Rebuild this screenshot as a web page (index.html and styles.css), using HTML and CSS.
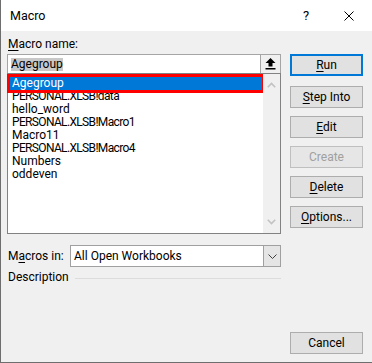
FILE: index.html
```html
<!DOCTYPE html>
<html>
<head>
<meta charset="utf-8">
<link rel="stylesheet" href="styles.css">
</head>
<body>
<div class="window">
  <div class="titlebar">
    <span class="title">Macro</span>
    <span class="help">?</span>
    <span class="close">
      <svg width="10" height="10" viewBox="0 0 10 10"><path d="M0.5 0.5 L9.5 9.5 M9.5 0.5 L0.5 9.5" stroke="#000" stroke-width="1" fill="none"/></svg>
    </span>
  </div>
  <div class="body">
    <div class="left">
      <div class="label"><u>M</u>acro name:</div>
      <div class="namebox">
        <div class="nameinput"><span class="sel">Agegroup</span></div>
        <div class="upbtn">
          <svg width="11" height="12" viewBox="0 0 11 12"><polygon points="5.5,0 10.5,5 7.5,5 7.5,8.5 3.5,8.5 3.5,5 0.5,5" fill="#000"/><rect x="0.5" y="10" width="10" height="1.5" fill="#000"/></svg>
        </div>
      </div>
      <div class="listbox">
        <ul class="items">
          <li class="item selected">Agegroup</li>
          <li class="item caps">PERSONAL.XLSB!data</li>
          <li class="item">hello_word</li>
          <li class="item caps">PERSONAL.XLSB!Macro1</li>
          <li class="item">Macro11</li>
          <li class="item caps">PERSONAL.XLSB!Macro4</li>
          <li class="item">Numbers</li>
          <li class="item">oddeven</li>
        </ul>
        <div class="scrollbar">
          <svg width="9" height="6" viewBox="0 0 9 6"><polyline points="0.8,5.2 4.5,1.5 8.2,5.2" stroke="#c2c2c2" stroke-width="1.6" fill="none"/></svg>
          <svg width="9" height="6" viewBox="0 0 9 6"><polyline points="0.8,0.8 4.5,4.5 8.2,0.8" stroke="#c2c2c2" stroke-width="1.6" fill="none"/></svg>
        </div>
      </div>
      <div class="macrosin">
        <span class="label2">M<u>a</u>cros in:</span>
        <div class="combo">
          <span class="combotext">All Open Workbooks</span>
          <div class="dropbtn">
            <svg width="9" height="5" viewBox="0 0 9 5"><polyline points="0.5,0.5 4.5,4.5 8.5,0.5" stroke="#404040" stroke-width="1" fill="none"/></svg>
          </div>
        </div>
      </div>
      <div class="desc"><span>Description</span><div class="rule"></div></div>
    </div>
    <div class="right">
      <div class="btn default"><u>R</u>un</div>
      <div class="btn"><u>S</u>tep Into</div>
      <div class="btn"><u>E</u>dit</div>
      <div class="btn disabled">Create</div>
      <div class="btn"><u>D</u>elete</div>
      <div class="btn"><u>O</u>ptions...</div>
      <div class="btn cancel">Cancel</div>
    </div>
  </div>
</div>
</body>
</html>
```
FILE: styles.css
```css
html, body {
  margin: 0;
  padding: 0;
  background: #f0f0f0;
}
.window {
  width: 372px;
  height: 363px;
  box-sizing: border-box;
  border-left: 1px solid #6e6e6e;
  border-bottom: 1px solid #6e6e6e;
  background: #f0f0f0;
  font-family: Roboto, "Noto Sans", sans-serif;
  font-size: 12px;
  color: #000;
  display: flex;
  flex-direction: column;
}
.titlebar {
  height: 31px;
  background: #fff;
  display: flex;
  align-items: center;
  flex-shrink: 0;
}
.title {
  margin-left: 9px;
  flex: 1;
  font-size: 12.5px;
  line-height: 15px;
  margin-top: -1px;
}
.help {
  width: 10px;
  font-size: 13px;
  margin-right: 31px;
  margin-top: -1px;
}
.close {
  display: flex;
  margin-right: 18px;
  margin-top: 1px;
}
.body {
  flex: 1;
  display: flex;
  padding: 6px 8px 8px 6px;
  gap: 9px;
}
.left {
  width: 274px;
  display: flex;
  flex-direction: column;
}
.label {
  line-height: 15px;
  padding-left: 1px;
}
u {
  text-decoration-thickness: 1px;
  text-underline-offset: 2px;
}
.namebox {
  margin-top: 2px;
  height: 20px;
  box-sizing: border-box;
  border: 1px solid #a5a5a5;
  background: #fff;
  display: flex;
}
.nameinput {
  flex: 1;
  display: flex;
  align-items: center;
  padding-left: 3px;
}
.sel {
  background: #c8c8c8;
  line-height: 13px;
}
.upbtn {
  width: 20px;
  box-sizing: border-box;
  border-left: 1px solid #a5a5a5;
  background: #f0f0f0;
  display: flex;
  align-items: center;
  justify-content: center;
}
.listbox {
  margin-top: -1px;
  height: 161px;
  box-sizing: border-box;
  border: 1px solid #828282;
  background: #fff;
  display: flex;
}
.items {
  list-style: none;
  margin: 0;
  padding: 3px 1px 0 2px;
  flex: 1;
}
.item {
  line-height: 13px;
  height: 13px;
  padding-left: 2px;
  white-space: nowrap;
}
.item.caps {
  letter-spacing: -0.65px;
}
.item.selected {
  background: #0078d7;
  color: #fff;
  outline: 3px solid #ff0000;
}
.scrollbar {
  width: 17px;
  background: #f0f0f0;
  display: flex;
  flex-direction: column;
  justify-content: space-between;
  align-items: center;
  padding: 8px 0 8px;
}
.macrosin {
  margin-top: 11px;
  display: flex;
  align-items: center;
}
.label2 {
  width: 62px;
  padding-left: 1px;
}
.combo {
  flex: 1;
  height: 22px;
  box-sizing: border-box;
  border: 1px solid #a0a0a0;
  background: #fff;
  display: flex;
  align-items: center;
}
.combotext {
  flex: 1;
  padding-left: 3px;
}
.dropbtn {
  width: 17px;
  height: 100%;
  box-sizing: border-box;
  background: #e5e5e5;
  border-left: 1px solid #a0a0a0;
  display: flex;
  align-items: center;
  justify-content: center;
}
.desc {
  margin-top: 3px;
  display: flex;
  align-items: center;
  line-height: 15px;
  padding-left: 1px;
}
.rule {
  flex: 1;
  height: 1px;
  background: #dcdcdc;
  margin-left: 6px;
  margin-top: 1px;
}
.right {
  width: 73px;
  display: flex;
  flex-direction: column;
  padding-top: 17px;
}
.btn {
  height: 22px;
  box-sizing: border-box;
  border: 1px solid #adadad;
  background: #e1e1e1;
  display: flex;
  align-items: center;
  justify-content: center;
  margin-bottom: 8px;
}
.btn.default {
  border: 2px solid #0078d7;
  margin-bottom: 10px;
}
.btn.disabled {
  color: #a0a0a0;
  border-color: #bfbfbf;
  background: #e6e6e6;
}
.btn.cancel {
  margin-top: auto;
  margin-bottom: 0;
}
```
